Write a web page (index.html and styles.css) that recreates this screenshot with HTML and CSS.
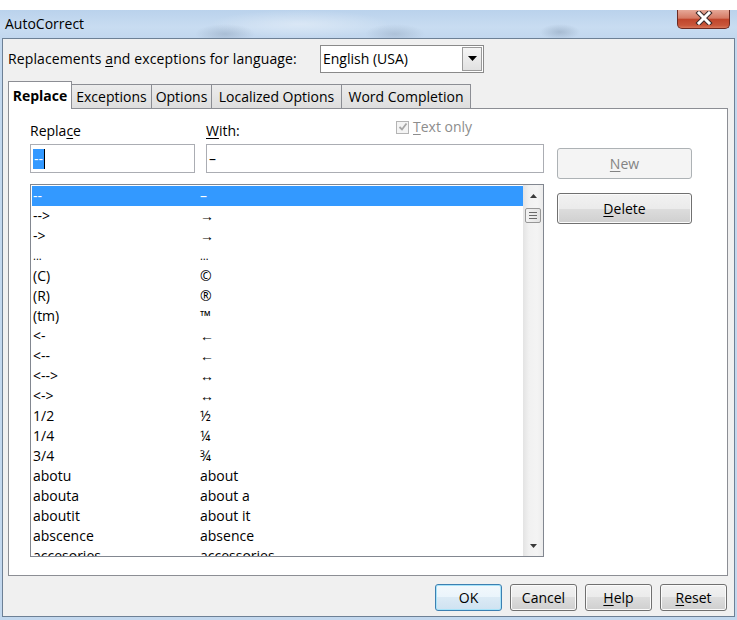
FILE: index.html
```html
<!DOCTYPE html>
<html>
<head>
<meta charset="utf-8">
<title>AutoCorrect</title>
<link rel="stylesheet" href="styles.css">
</head>
<body>
<div class="window">
  <div class="titlebar">
    <span class="title">AutoCorrect</span>
    <div class="close">
      <svg width="20" height="14" viewBox="0 0 20 14"><path d="M5 2 L15 12 M15 2 L5 12" stroke="#3b2a2a" stroke-width="5" stroke-linecap="square"/><path d="M5 2 L15 12 M15 2 L5 12" stroke="#fff" stroke-width="3" stroke-linecap="square"/></svg>
    </div>
  </div>
  <div class="client">
    <div class="lang-row">
      <span class="lang-label">Replacements <u>a</u>nd exceptions for language:</span>
      <div class="combo">
        <span class="combo-text">English (USA)</span>
        <span class="combo-btn"><svg width="9" height="5" viewBox="0 0 9 5"><path d="M0 0 H9 L4.5 5 Z" fill="#000"/></svg></span>
      </div>
    </div>
    <div class="tabs">
      <span class="tab active t-replace">Replace</span>
      <span class="tab t-exc">Exceptions</span>
      <span class="tab t-opt">Options</span>
      <span class="tab t-loc">Localized Options</span>
      <span class="tab t-word">Word Completion</span>
    </div>
    <div class="panel">
      <div class="left">
        <div class="labels">
          <span class="lbl-replace">Repla<u>c</u>e</span>
          <span class="lbl-with"><u>W</u>ith:</span>
          <span class="chk">
            <span class="chk-box"><svg width="10" height="10" viewBox="0 0 10 10"><path d="M1.5 5 L4 7.5 L8.5 1.5" fill="none" stroke="#a6a6a6" stroke-width="1.8"/></svg></span>
            <span class="chk-label"><u>T</u>ext only</span>
          </span>
        </div>
        <div class="inputs">
          <div class="input in-replace"><span class="sel">--</span><span class="caret"></span></div>
          <div class="input in-with">–</div>
        </div>
        <div class="list">
          <div class="rows">
            <div class="row selected"><span class="c1">--</span><span>–</span></div>
            <div class="row"><span class="c1">--&gt;</span><span>→</span></div>
            <div class="row"><span class="c1">-&gt;</span><span>→</span></div>
            <div class="row"><span class="c1 small">...</span><span class="small">…</span></div>
            <div class="row"><span class="c1">(C)</span><span>©</span></div>
            <div class="row"><span class="c1">(R)</span><span>®</span></div>
            <div class="row"><span class="c1">(tm)</span><span>™</span></div>
            <div class="row"><span class="c1">&lt;-</span><span>←</span></div>
            <div class="row"><span class="c1">&lt;--</span><span>←</span></div>
            <div class="row"><span class="c1">&lt;--&gt;</span><span>↔</span></div>
            <div class="row"><span class="c1">&lt;-&gt;</span><span>↔</span></div>
            <div class="row"><span class="c1">1/2</span><span>½</span></div>
            <div class="row"><span class="c1">1/4</span><span>¼</span></div>
            <div class="row"><span class="c1">3/4</span><span>¾</span></div>
            <div class="row"><span class="c1">abotu</span><span>about</span></div>
            <div class="row"><span class="c1">abouta</span><span>about a</span></div>
            <div class="row"><span class="c1">aboutit</span><span>about it</span></div>
            <div class="row"><span class="c1">abscence</span><span>absence</span></div>
            <div class="row"><span class="c1">accesories</span><span>accessories</span></div>
          </div>
          <div class="scrollbar">
            <span class="sb-btn"><svg width="7" height="4" viewBox="0 0 7 4"><path d="M0 4 H7 L3.5 0 Z" fill="#3a3a3a"/></svg></span>
            <span class="sb-thumb"><span></span><span></span><span></span></span>
            <span class="sb-track"></span>
            <span class="sb-btn"><svg width="7" height="4" viewBox="0 0 7 4"><path d="M0 0 H7 L3.5 4 Z" fill="#3a3a3a"/></svg></span>
          </div>
        </div>
      </div>
      <div class="right">
        <span class="btn btn-wide disabled"><u>N</u>ew</span>
        <span class="btn btn-wide"><u>D</u>elete</span>
      </div>
    </div>
    <div class="footer">
      <span class="btn btn-small focused">OK</span>
      <span class="btn btn-small">Cancel</span>
      <span class="btn btn-small"><u>H</u>elp</span>
      <span class="btn btn-small"><u>R</u>eset</span>
    </div>
  </div>
</div>
</body>
</html>
```
FILE: styles.css
```css
* { box-sizing: border-box; }
html, body { margin: 0; padding: 0; }
body {
  width: 737px;
  height: 620px;
  overflow: hidden;
  background: #ffffff;
  font-family: "Open Sans", "Liberation Sans", sans-serif;
  font-size: 14px;
  color: #000;
}
u { text-decoration: underline; text-underline-offset: 2px; }

.window {
  margin-top: 10px;
  height: 610px;
  background: #c3d8ee;
  padding: 0 2px 3px 2px;
  display: flex;
  flex-direction: column;
}
.titlebar {
  height: 28px;
  margin: 0 -2px;
  display: flex;
  align-items: flex-start;
  background:
    radial-gradient(ellipse 30px 10px at 225px 24px, rgba(120,140,165,0.35), transparent),
    radial-gradient(ellipse 30px 10px at 395px 24px, rgba(120,140,165,0.3), transparent),
    radial-gradient(ellipse 20px 8px at 560px 22px, rgba(110,130,155,0.35), transparent),
    radial-gradient(ellipse 90px 14px at 300px 14px, rgba(255,255,255,0.35), transparent),
    linear-gradient(to bottom, #bad2ec, #c8dcf1 60%, #c2d7ee);
}
.title {
  padding: 4px 0 0 5px;
  line-height: 20px;
  font-size: 14px;
  color: #000;
}
.close {
  margin-left: auto;
  margin-right: 7px;
  width: 53px;
  height: 19px;
  border: 1px solid #6b2a22;
  border-top: none;
  border-radius: 0 0 5px 5px;
  background: linear-gradient(to bottom, #e6a898 0%, #d57a64 45%, #c0452c 52%, #c9563a 85%, #d8765a 100%);
  display: flex;
  justify-content: center;
  align-items: flex-start;
  padding-top: 1px;
}

.client {
  flex: 1;
  border: 1px solid #6d8095;
  background: #f0f0f0;
  display: flex;
  flex-direction: column;
}

.lang-row {
  display: flex;
  align-items: center;
  padding: 5px 0 0 5px;
  height: 34px;
}
.lang-label {
  width: 312px;
  line-height: 20px;
  letter-spacing: 0.12px;
}
.combo {
  width: 164px;
  height: 28px;
  border: 1px solid #8a8a8a;
  background: #fff;
  display: flex;
  align-items: center;
  padding: 0 1px 0 2px;
}
.combo-text { flex: 1; line-height: 20px; }
.combo-btn {
  width: 20px;
  height: 24px;
  border: 1px solid #9a9a9a;
  background: linear-gradient(to bottom, #f5f5f5, #e1e1e1);
  display: flex;
  align-items: center;
  justify-content: center;
}

.tabs {
  display: flex;
  align-items: flex-end;
  padding-left: 5px;
  margin-top: 7px;
  height: 28px;
  position: relative;
  z-index: 1;
}
.tab {
  height: 24px;
  border: 1px solid #8c8e94;
  border-bottom: none;
  margin-left: -1px;
  background: linear-gradient(to bottom, #ececec, #dedede);
  line-height: 23px;
  white-space: nowrap;
  text-align: center;
}
.tab.active {
  margin-left: 0;
  height: 28px;
  margin-bottom: -1px;
  background: #fff;
  font-weight: bold;
  line-height: 27px;
  position: relative;
  z-index: 2;
}
.t-replace { width: 64px; }
.t-exc { width: 81px; }
.t-opt { width: 61px; }
.t-loc { width: 131px; }
.t-word { width: 130px; }

.panel {
  margin-left: 5px;
  width: 720px;
  height: 468px;
  border: 1px solid #8c8e94;
  background: #fff;
  display: flex;
  padding-left: 21px;
}
.left {
  width: 514px;
  display: flex;
  flex-direction: column;
}
.labels {
  height: 35px;
  display: flex;
  align-items: flex-start;
  padding-top: 12px;
  line-height: 20px;
}
.lbl-replace { width: 176px; }
.lbl-with { width: 190px; }
.chk {
  display: flex;
  align-items: center;
  margin-top: -4px;
  color: #8d8d8d;
}
.chk-box {
  width: 13px;
  height: 13px;
  border: 1px solid #b4b4b4;
  background: #f4f4f4;
  display: flex;
  align-items: center;
  justify-content: center;
  margin-right: 4px;
}
.inputs {
  display: flex;
  gap: 11px;
  height: 29px;
}
.input {
  border: 1px solid #abadb3;
  background: #fff;
  display: flex;
  align-items: center;
  padding-left: 2px;
  line-height: 20px;
}
.in-replace { width: 165px; }
.in-with { flex: 1; }
.sel {
  background: #3399ff;
  color: #fff;
  height: 20px;
  padding: 0 1px;
}
.caret {
  width: 1px;
  height: 20px;
  background: #000;
}

.list {
  margin-top: 11px;
  height: 373px;
  border: 1px solid #828790;
  background: #fff;
  display: flex;
  padding: 1px 0 0 1px;
}
.rows {
  flex: 1;
  overflow: hidden;
}
.row {
  height: 20px;
  display: flex;
  align-items: center;
  line-height: 20px;
  white-space: nowrap;
}
.row.selected { background: #3399ff; color: #fff; }
.c1 { width: 168px; padding-left: 1px; }
.small { font-size: 11px; }

.scrollbar {
  width: 20px;
  margin-top: -1px;
  display: flex;
  flex-direction: column;
  align-items: center;
  background: linear-gradient(to right, #e3e3e3, #f1f1f1 30%, #f4f4f4 70%, #ececec);
}
.sb-btn {
  height: 21px;
  display: flex;
  align-items: center;
  justify-content: center;
}
.sb-thumb {
  width: 16px;
  height: 15px;
  margin-top: 2px;
  border: 1px solid #979797;
  border-radius: 2px;
  background: linear-gradient(to right, #f2f2f2, #e3e3e3);
  display: flex;
  flex-direction: column;
  justify-content: center;
  align-items: center;
  gap: 2px;
}
.sb-thumb span {
  width: 8px;
  height: 1px;
  background: #6a6a6a;
}
.sb-track { flex: 1; }

.right {
  margin-left: 13px;
  padding-top: 39px;
  display: flex;
  flex-direction: column;
  gap: 14px;
}
.btn {
  display: flex;
  align-items: center;
  justify-content: center;
  border: 1px solid #707070;
  border-radius: 3px;
  background: linear-gradient(to bottom, #f2f2f2 0%, #ebebeb 50%, #dddddd 50%, #cfcfcf 100%);
  box-shadow: inset 0 0 0 1px #fbfbfb;
  line-height: 20px;
}
.btn-wide { width: 135px; height: 31px; }
.btn.disabled {
  border-color: #adb2b5;
  background: #f4f4f4;
  box-shadow: none;
  color: #838383;
}
.footer {
  display: flex;
  justify-content: flex-end;
  gap: 8px;
  padding: 8px 7px 0 0;
}
.btn-small { width: 67px; height: 27px; }
.btn.focused {
  border-color: #3c7fb1;
  box-shadow: inset 0 0 0 1px #a7e3f9;
  background: linear-gradient(to bottom, #f2f8fc 0%, #eaf4fb 50%, #dbeaf5 50%, #cfe2f1 100%);
}
```
